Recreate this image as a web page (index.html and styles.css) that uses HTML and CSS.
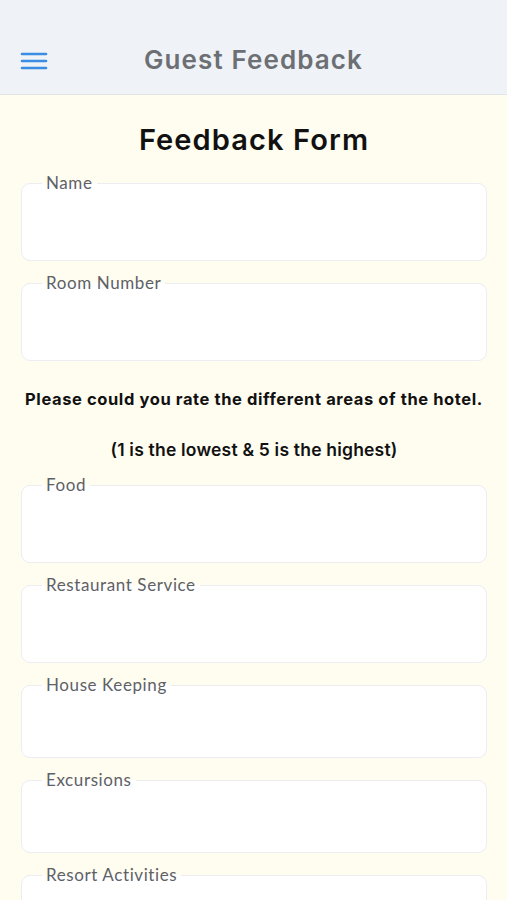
FILE: index.html
```html
<!DOCTYPE html>
<html lang="en">
<head>
<meta charset="utf-8">
<title>Guest Feedback</title>
<link rel="stylesheet" href="styles.css">
</head>
<body>
<header class="app-bar">
  <button class="menu-btn" aria-label="Menu">
    <svg width="28" height="20" viewBox="0 0 28 20"><g stroke="#3b8ce3" stroke-width="2.6" stroke-linecap="round"><line x1="2" y1="3" x2="26" y2="3"/><line x1="2" y1="10" x2="26" y2="10"/><line x1="2" y1="17" x2="26" y2="17"/></g></svg>
  </button>
  <h1 class="app-title">Guest Feedback</h1>
</header>
<main class="content">
  <h2 class="form-title">Feedback Form</h2>
  <form class="form">
    <fieldset class="field"><legend>Name</legend></fieldset>
    <fieldset class="field"><legend>Room Number</legend></fieldset>
    <p class="intro">Please could you rate the different areas of the hotel.</p>
    <p class="scale">(1 is the lowest &amp; 5 is the highest)</p>
    <fieldset class="field"><legend>Food</legend></fieldset>
    <fieldset class="field"><legend>Restaurant Service</legend></fieldset>
    <fieldset class="field field--short"><legend>House Keeping</legend></fieldset>
    <fieldset class="field field--short"><legend>Excursions</legend></fieldset>
    <fieldset class="field"><legend>Resort Activities</legend></fieldset>
  </form>
</main>
</body>
</html>
```
FILE: styles.css
```css
* { box-sizing: border-box; }
html, body { margin: 0; padding: 0; }
body {
  background: #fffcf0;
  font-family: "Inter", "Liberation Sans", sans-serif;
  height: 900px;
  overflow: hidden;
}
.app-bar {
  height: 95px;
  background: #eff2f6;
  border-bottom: 1px solid #e3e4e6;
  display: flex;
  align-items: flex-end;
  padding: 0 0 20px 20px;
  position: relative;
}
.menu-btn {
  background: none;
  border: 0;
  padding: 0;
  width: 30px;
  height: 22px;
  display: flex;
  align-items: center;
  margin-bottom: 2px;
}
.app-title {
  position: absolute;
  left: 0; right: 0;
  bottom: 19px;
  margin: 0;
  text-align: center;
  font-size: 26px;
  font-weight: 600;
  letter-spacing: 1.1px;
  color: #6c6f73;
  pointer-events: none;
}
.content {
  padding: 0 20px 0 21px;
  height: 805px;
  overflow: hidden;
}
.form-title {
  margin: 0;
  padding-top: 27px;
  text-align: center;
  font-size: 29px;
  font-weight: 600;
  letter-spacing: 1.1px;
  color: #111;
  line-height: 36px;
}
.form {
  display: flex;
  flex-direction: column;
  gap: 13px;
  margin-top: 16px;
}
.field {
  margin: 0;
  border: 1.5px solid #ededf1;
  border-radius: 9px;
  background: #fff;
  height: 87px;
  padding: 0 20px;
  min-width: 0;
  flex-shrink: 0;
}
.field--short { height: 82px; }
.field legend {
  padding: 0 4px;
  font-family: "Lato", "Liberation Sans", sans-serif;
  font-size: 17px;
  letter-spacing: 0.6px;
  color: #5e6166;
  line-height: 18px;
}
.intro {
  margin: 14px 0 0;
  text-align: center;
  font-size: 16.5px;
  line-height: 22px;
  font-weight: 700;
  letter-spacing: 0.6px;
  color: #111;
  white-space: nowrap;
}
.scale {
  margin: 15px 0 1px;
  text-align: center;
  font-size: 17.5px;
  line-height: 24px;
  font-weight: 600;
  letter-spacing: 0.2px;
  color: #111;
}
```
